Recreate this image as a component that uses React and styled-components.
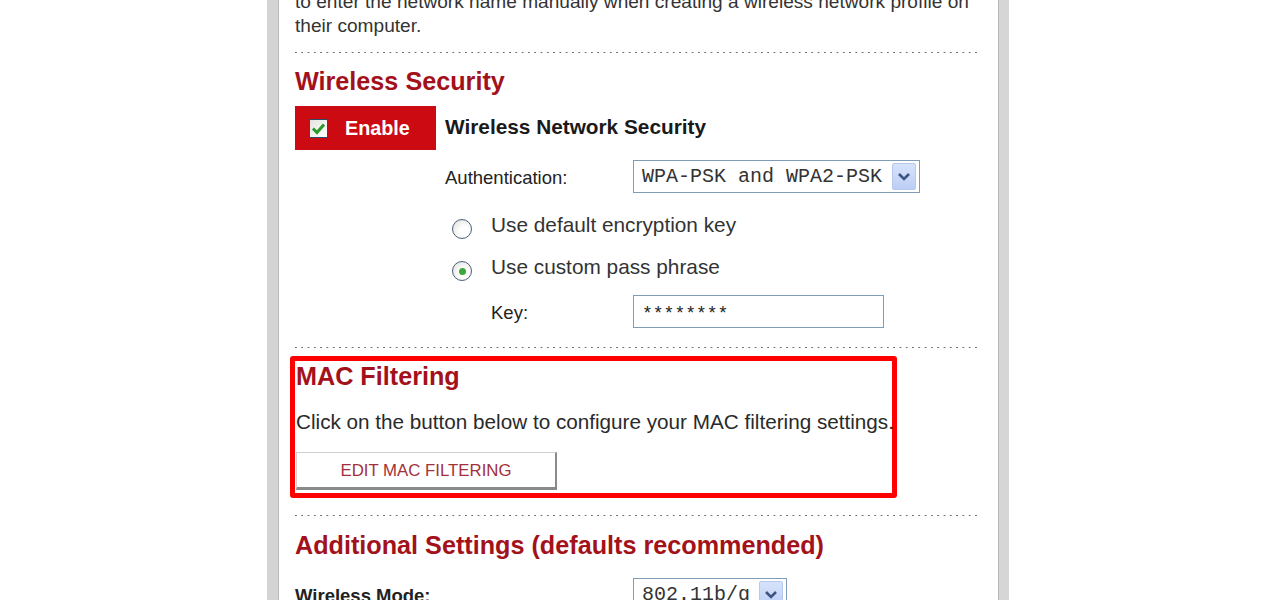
import styled, { createGlobalStyle } from "styled-components";

const GlobalStyle = createGlobalStyle`
  html, body {
    margin: 0;
    padding: 0;
    background: #ffffff;
    overflow: hidden;
  }
  body {
    font-family: "Liberation Sans", Arial, sans-serif;
  }
`;

const Page = styled.div`
  display: flex;
  height: 600px;
  overflow: hidden;
`;

const Frame = styled.div`
  margin-left: 267px;
  width: 721px;
  height: 600px;
  border-left: 11px solid #d4d4d4;
  border-right: 10px solid #d6d6d6;
  box-shadow: inset 1px 0 #b9b9b9, inset -1px 0 #b9b9b9;
  overflow: hidden;
`;

const Content = styled.div`
  margin-top: -10px;
  padding: 0 22px 0 17px;
`;

const Intro = styled.p`
  margin: 0;
  font-size: 19.1px;
  line-height: 24px;
  color: #333;
  white-space: nowrap;
`;

const Divider = styled.div`
  margin-top: ${(p) => p.$top}px;
  height: 1px;
  background-image: linear-gradient(to right, #6a6a6a 1.5px, transparent 1.5px);
  background-size: 6.3px 1px;
`;

const SectionTitle = styled.h2`
  margin: ${(p) => p.$top}px 0 0;
  font-size: 25.2px;
  line-height: 30px;
  font-weight: bold;
  color: #a3111b;
`;

const EnableRow = styled.div`
  display: flex;
  align-items: center;
  margin-top: 10px;
  height: 44px;
`;

const EnableBox = styled.div`
  display: flex;
  align-items: center;
  width: 141px;
  height: 44px;
  box-sizing: border-box;
  padding-left: 14px;
  background: #cc0a12;
`;

const CheckBox = styled.div`
  width: 19px;
  height: 19px;
  box-sizing: border-box;
  border: 1px solid #2a4a6a;
  background: linear-gradient(135deg, #e4e4e0, #ffffff);
  display: flex;
  align-items: center;
  justify-content: center;
  margin-right: 17px;
`;

const EnableLabel = styled.span`
  color: #ffffff;
  font-size: 19.8px;
  font-weight: bold;
`;

const RowTitle = styled.span`
  margin-left: 9px;
  margin-top: -3px;
  font-size: 20.8px;
  font-weight: bold;
  color: #1a1a1a;
`;

const FieldRow = styled.div`
  display: flex;
  align-items: center;
  height: 33px;
  margin-top: ${(p) => p.$top}px;
  padding-left: ${(p) => p.$indent}px;
`;

const FieldLabel = styled.span`
  width: ${(p) => p.$width}px;
  font-size: 18.5px;
  font-weight: ${(p) => (p.$bold ? "bold" : "normal")};
  color: #222;
  padding-top: 2px;
`;

const Select = styled.div`
  display: flex;
  align-items: center;
  justify-content: space-between;
  width: ${(p) => p.$width}px;
  height: 33px;
  box-sizing: border-box;
  border: 1px solid #7f9db9;
  padding: 0 3px 0 8px;
  font-family: "Liberation Mono", "Courier New", monospace;
  font-size: 20px;
  color: #333;
  background: #fff;
`;

const ArrowButton = styled.div`
  width: 24px;
  height: 27px;
  box-sizing: border-box;
  border: 1px solid #b6c8ee;
  border-radius: 2px;
  background: linear-gradient(#d7e3fb, #bccef6);
  display: flex;
  align-items: center;
  justify-content: center;
`;

const TextInput = styled.div`
  display: flex;
  align-items: center;
  width: 251px;
  height: 33px;
  box-sizing: border-box;
  border: 1px solid #7f9db9;
  padding: 4px 0 0 8px;
  font-family: "Liberation Mono", "Courier New", monospace;
  font-size: 18px;
  color: #222;
`;

const RadioRow = styled.label`
  display: flex;
  align-items: flex-start;
  margin-top: ${(p) => p.$top}px;
  padding-left: 157px;
  height: 26px;
`;

const Radio = styled.span`
  width: 20px;
  height: 20px;
  box-sizing: border-box;
  margin-top: 7px;
  margin-right: 19px;
  border-radius: 50%;
  border: 1px solid #4b5f78;
  background: radial-gradient(circle at 65% 65%, #ffffff 30%, #dcdcd6 100%);
  display: flex;
  align-items: center;
  justify-content: center;
  flex-shrink: 0;
`;

const RadioDot = styled.span`
  width: 7px;
  height: 7px;
  border-radius: 50%;
  background: #3aa83a;
`;

const RadioText = styled.span`
  font-size: 20.8px;
  line-height: 26px;
  color: #333;
`;

const Highlight = styled.div`
  margin: 8px 0 0 -5px;
  width: 607px;
  box-sizing: border-box;
  border: 5px solid #ff0000;
  border-radius: 3px;
  padding: 0 0 3px 1px;
`;

const BoxText = styled.p`
  margin: 18.5px 0 0;
  font-size: 20.7px;
  line-height: 24px;
  color: #2a2a2a;
  white-space: nowrap;
`;

const ActionButton = styled.button`
  display: block;
  margin-top: 18.5px;
  width: 261px;
  height: 38px;
  box-sizing: border-box;
  background: #ffffff;
  border: 1px solid #d0d0d0;
  border-right: 2px solid #8a8a8a;
  border-bottom: 3px solid #8a8a8a;
  font-family: "Liberation Sans", Arial, sans-serif;
  font-size: 16.8px;
  color: #a3303a;
  padding: 2px 0 0;
  cursor: pointer;
`;

const Chevron = () => (
  <svg width="14" height="10" viewBox="0 0 14 10">
    <path d="M2 2 L7 7 L12 2" fill="none" stroke="#3d5483" strokeWidth="2.6" />
  </svg>
);

const Check = () => (
  <svg width="15" height="13" viewBox="0 0 15 13">
    <path d="M2 6.5 L6 10.5 L13 2.5" fill="none" stroke="#2a9a2a" strokeWidth="3" />
  </svg>
);

export default function App() {
  return (
    <Page>
      <GlobalStyle />
      <Frame>
        <Content>
          <Intro>
            to enter the network name manually when creating a wireless network profile on
            <br />
            their computer.
          </Intro>
          <Divider $top={14} />
          <SectionTitle $top={13}>Wireless Security</SectionTitle>
          <EnableRow>
            <EnableBox>
              <CheckBox>
                <Check />
              </CheckBox>
              <EnableLabel>Enable</EnableLabel>
            </EnableBox>
            <RowTitle>Wireless Network Security</RowTitle>
          </EnableRow>
          <FieldRow $top={10} $indent={150}>
            <FieldLabel $width={188}>Authentication:</FieldLabel>
            <Select $width={287}>
              <span>WPA-PSK and WPA2-PSK</span>
              <ArrowButton>
                <Chevron />
              </ArrowButton>
            </Select>
          </FieldRow>
          <RadioRow $top={19}>
            <Radio />
            <RadioText>Use default encryption key</RadioText>
          </RadioRow>
          <RadioRow $top={16}>
            <Radio>
              <RadioDot />
            </Radio>
            <RadioText>Use custom pass phrase</RadioText>
          </RadioRow>
          <FieldRow $top={15} $indent={196}>
            <FieldLabel $width={142}>Key:</FieldLabel>
            <TextInput>********</TextInput>
          </FieldRow>
          <Divider $top={19} />
          <Highlight>
            <SectionTitle $top={0}>MAC Filtering</SectionTitle>
            <BoxText>Click on the button below to configure your MAC filtering settings.</BoxText>
            <ActionButton>EDIT MAC FILTERING</ActionButton>
          </Highlight>
          <Divider $top={17} />
          <SectionTitle $top={14}>Additional Settings (defaults recommended)</SectionTitle>
          <FieldRow $top={18} $indent={0}>
            <FieldLabel $width={338} $bold>
              Wireless Mode:
            </FieldLabel>
            <Select $width={154}>
              <span>802.11b/g</span>
              <ArrowButton>
                <Chevron />
              </ArrowButton>
            </Select>
          </FieldRow>
        </Content>
      </Frame>
    </Page>
  );
}
